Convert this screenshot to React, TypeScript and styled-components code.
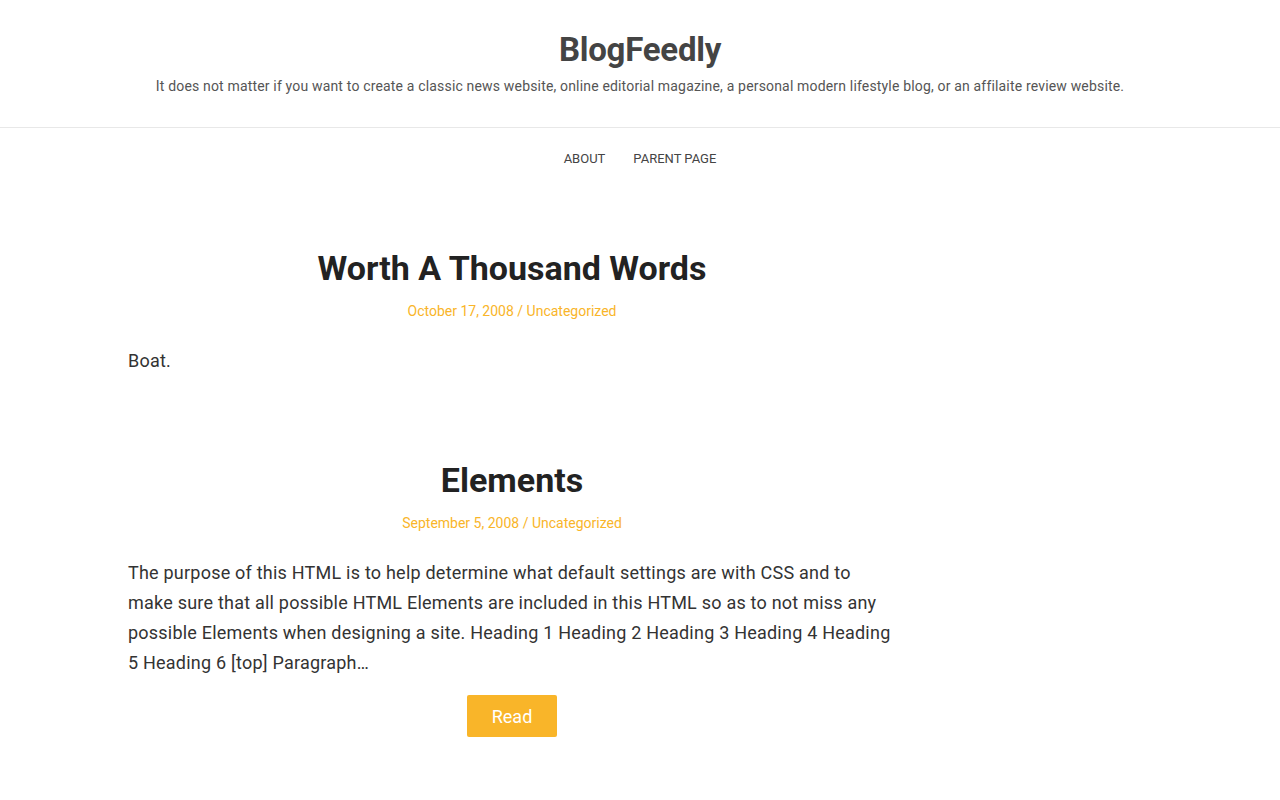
import React from 'react';
import styled, { createGlobalStyle } from 'styled-components';

const GlobalStyle = createGlobalStyle`
  html, body {
    margin: 0;
    padding: 0;
    background: #fff;
  }
  body {
    font-family: Roboto, "Noto Sans", Arial, sans-serif;
    color: #333;
  }
  * { box-sizing: border-box; }
`;

interface Post {
  title: string;
  date: string;
  category: string;
  excerpt: string;
  readMore?: boolean;
}

const posts: Post[] = [
  {
    title: 'Worth A Thousand Words',
    date: 'October 17, 2008',
    category: 'Uncategorized',
    excerpt: 'Boat.',
  },
  {
    title: 'Elements',
    date: 'September 5, 2008',
    category: 'Uncategorized',
    excerpt:
      'The purpose of this HTML is to help determine what default settings are with CSS and to make sure that all possible HTML Elements are included in this HTML so as to not miss any possible Elements when designing a site. Heading 1 Heading 2 Heading 3 Heading 4 Heading 5 Heading 6 [top] Paragraph…',
    readMore: true,
  },
];

export default function App() {
  return (
    <>
      <GlobalStyle />
      <Header>
        <SiteTitle href='#'>BlogFeedly</SiteTitle>
        <Tagline>
          It does not matter if you want to create a classic news website, online editorial magazine, a
          personal modern lifestyle blog, or an affilaite review website.
        </Tagline>
      </Header>
      <Nav>
        <NavLink href='#'>ABOUT</NavLink>
        <NavLink href='#'>PARENT PAGE</NavLink>
      </Nav>
      <Container>
        <Primary>
          {posts.map((post) => (
            <Article key={post.title}>
              <PostTitle>{post.title}</PostTitle>
              <Meta>
                <MetaLink href='#'>{post.date}</MetaLink> / <MetaLink href='#'>{post.category}</MetaLink>
              </Meta>
              <Excerpt>{post.excerpt}</Excerpt>
              {post.readMore && (
                <ButtonRow>
                  <ReadButton href='#'>Read</ReadButton>
                </ButtonRow>
              )}
            </Article>
          ))}
        </Primary>
      </Container>
    </>
  );
}

const Header = styled.header`
  display: flex;
  flex-direction: column;
  align-items: center;
  padding: 30px 0 31px;
  border-bottom: 1px solid #e8e8e8;
`;

const SiteTitle = styled.a`
  font-size: 33px;
  line-height: 40px;
  font-weight: 700;
  letter-spacing: -0.25px;
  color: #444;
  text-decoration: none;
`;

const Tagline = styled.p`
  margin: 6px 0 0;
  font-size: 14px;
  line-height: 20px;
  color: #555;
  letter-spacing: 0.17px;
`;

const Nav = styled.nav`
  display: flex;
  justify-content: center;
  gap: 28px;
  padding: 21px 0 0;
`;

const NavLink = styled.a`
  font-size: 13px;
  line-height: 20px;
  color: #444;
  text-decoration: none;
`;

const Container = styled.div`
  width: 1024px;
  margin: 0 auto;
  padding-top: 79px;
`;

const Primary = styled.main`
  width: 768px;
`;

const Article = styled.article`
  & + & {
    margin-top: 84px;
  }
`;

const PostTitle = styled.h2`
  margin: 0;
  text-align: center;
  font-size: 34px;
  line-height: 40px;
  font-weight: 700;
  color: #222;
`;

const Meta = styled.div`
  margin-top: 13px;
  text-align: center;
  font-size: 14px;
  line-height: 20px;
  color: #f9b529;
`;

const MetaLink = styled.a`
  color: #f9b529;
  text-decoration: none;
`;

const Excerpt = styled.p`
  margin: 25px 0 0;
  font-size: 18px;
  line-height: 30px;
  letter-spacing: 0.22px;
  color: #333;
`;

const ButtonRow = styled.div`
  display: flex;
  justify-content: center;
  margin-top: 17px;
`;

const ReadButton = styled.a`
  display: inline-flex;
  align-items: center;
  justify-content: center;
  width: 90px;
  height: 42px;
  background: #f9b529;
  color: #fff;
  font-size: 18px;
  border-radius: 2px;
  text-decoration: none;
`;
